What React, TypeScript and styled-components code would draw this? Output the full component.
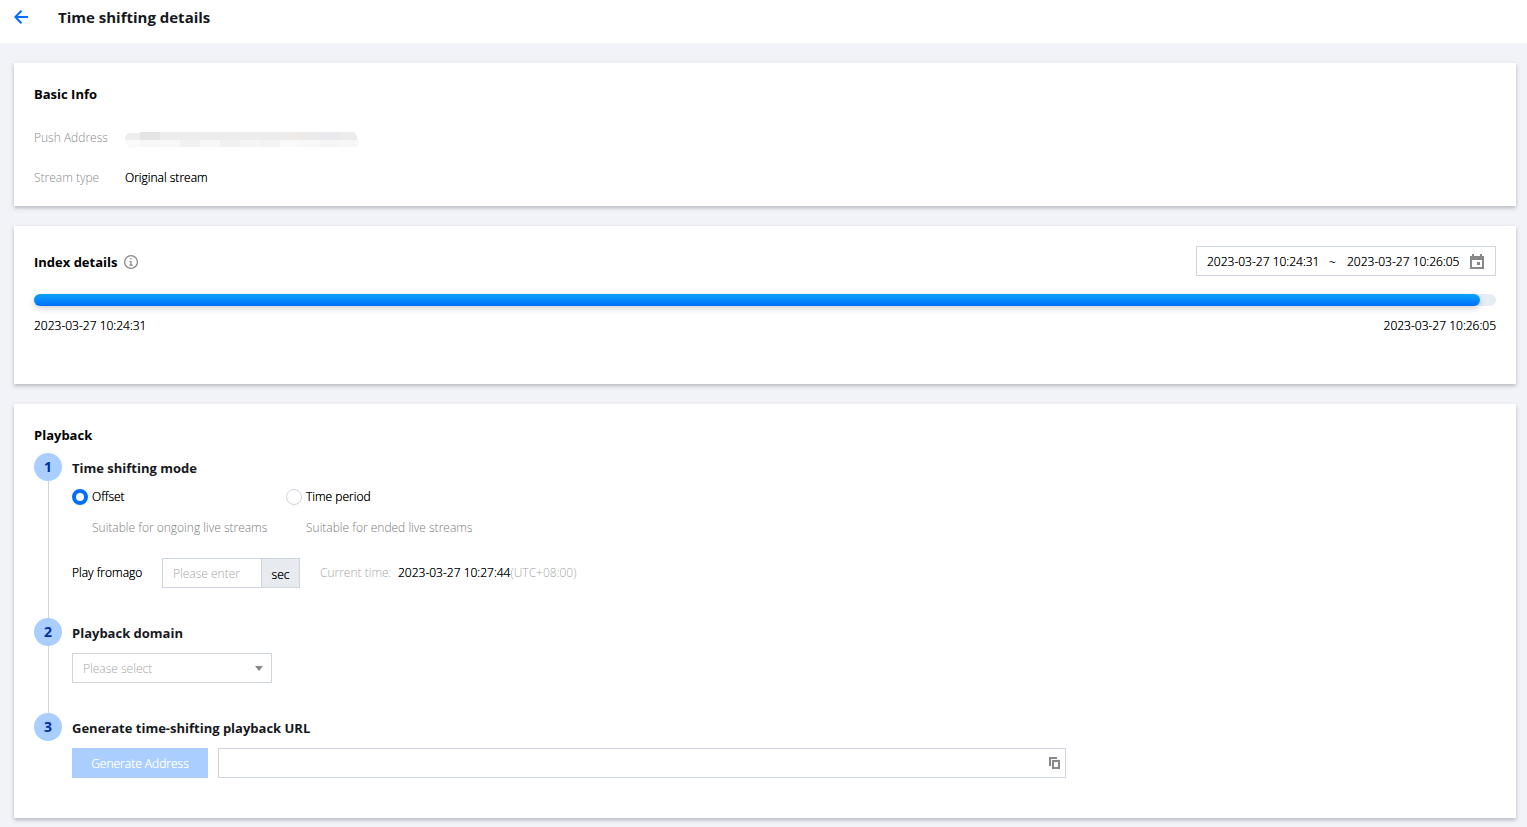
import React, { useState } from "react";
import styled, { createGlobalStyle } from "styled-components";

const GlobalStyle = createGlobalStyle`
  *, *::before, *::after { box-sizing: border-box; }
  body {
    margin: 0;
    background: #f2f3f8;
    color: #000;
    font-family: "Open Sans", "Noto Sans", sans-serif;
    font-size: 12px;
    font-weight: 300;
    line-height: 20px;
    text-shadow: 0 0 0 currentColor;
  }
  h1, h2, h3, p, dl, dd { margin: 0; }
  h1, h2, h3 { text-shadow: none; }
  button, input, select { font: inherit; color: inherit; margin: 0; text-shadow: inherit; }
  fieldset { border: 0; margin: 0; padding: 0; min-width: 0; }
`;

const Header = styled.header`
  display: flex;
  align-items: center;
  gap: 30px;
  height: 43px;
  padding: 0 14px 9px;
  background: #fff;
`;

const BackLink = styled.a`
  display: flex;
  color: #006eff;
`;

const PageTitle = styled.h1`
  font-size: 15px;
  font-weight: 700;
  line-height: 22px;
  color: #16181d;
`;

const Content = styled.main`
  display: flex;
  flex-direction: column;
  gap: 20px;
  padding: 20px 11px 9px 14px;
`;

const Card = styled.section<{ $bottom: number }>`
  padding: 20px 20px ${(p) => p.$bottom}px;
  background: #fff;
  box-shadow: 0 2px 4px rgba(54, 58, 80, 0.32);
`;

const CardTitle = styled.h2`
  font-size: 13px;
  font-weight: 700;
  line-height: 22px;
`;

const InfoList = styled.dl`
  display: grid;
  grid-template-columns: 91px 1fr;
  gap: 18px 0;
  margin-top: 22px;
  line-height: 22px;
`;

const InfoLabel = styled.dt`
  color: #888;
  text-shadow: none;
`;

const InfoValue = styled.dd`
  display: flex;
  align-items: center;
`;

const CardHead = styled.div`
  display: flex;
  align-items: center;
  justify-content: space-between;
  height: 30px;
`;

const TitleGroup = styled.div`
  display: flex;
  align-items: center;
  gap: 6px;
  padding-top: 2px;
`;

const IconButton = styled.button`
  display: flex;
  flex: none;
  padding: 0;
  border: 0;
  background: none;
  color: #888;
  cursor: pointer;
`;

const DateRange = styled.div`
  display: flex;
  align-items: center;
  width: 300px;
  height: 30px;
  padding: 0 10px;
  border: 1px solid #cfd5de;
`;

const DateInput = styled.input`
  flex: 1;
  min-width: 0;
  height: 28px;
  padding: 0;
  border: 0;
  outline: 0;
  background: none;
`;

const Tilde = styled.span`
  width: 18px;
  padding-top: 4px;
`;

const Track = styled.div`
  height: 12px;
  margin-top: 18px;
  border-radius: 6px;
  background: #e6edf7;
`;

const Fill = styled.div`
  height: 12px;
  border-radius: 6px;
  background: linear-gradient(#0aa5f5, #006eff);
  box-shadow: 0 2px 6px rgba(0, 0, 0, 0.2);
`;

const TrackLabels = styled.div`
  display: flex;
  justify-content: space-between;
  margin-top: 10px;
`;

const Steps = styled.div`
  display: flex;
  flex-direction: column;
  margin-top: 7px;
`;

const StepRow = styled.section`
  display: flex;
  gap: 10px;
`;

const StepRail = styled.div`
  display: flex;
  flex: none;
  flex-direction: column;
  align-items: center;
  width: 28px;
`;

const StepNumber = styled.span`
  width: 28px;
  height: 28px;
  border-radius: 50%;
  background: #a9ceff;
  color: #00309c;
  font-size: 14px;
  font-weight: 700;
  line-height: 28px;
  text-align: center;
  text-shadow: none;
`;

const StepLine = styled.span`
  flex: 1;
  width: 1px;
  background: #cfd5de;
`;

const StepBody = styled.div<{ $bottom: number }>`
  flex: 1;
  min-width: 0;
  padding-bottom: ${(p) => p.$bottom}px;
`;

const StepTitle = styled.h3`
  margin-bottom: 5px;
  font-size: 13px;
  font-weight: 700;
  line-height: 30px;
  color: #16181d;
`;

const ModeOptions = styled.fieldset`
  display: grid;
  grid-template-columns: repeat(2, 214px);
`;

const ModeLabel = styled.label`
  display: flex;
  align-items: center;
  gap: 4px;
  line-height: 18px;
`;

const Radio = styled.input`
  appearance: none;
  flex: none;
  width: 16px;
  height: 16px;
  border: 1px solid #cfd5de;
  border-radius: 50%;
  background: #fff;
  &:checked { border: 4px solid #006eff; }
`;

const ModeHint = styled.p`
  padding: 12px 0 0 20px;
  color: #7a7a7a;
  text-shadow: none;
`;

const OffsetRow = styled.div`
  display: flex;
  align-items: center;
  margin-top: 20px;
`;

const FieldLabel = styled.label`
  width: 90px;
`;

const InputGroup = styled.div`
  display: flex;
  width: 138px;
  height: 30px;
  margin-right: 20px;
  border: 1px solid #cfd5de;
`;

const OffsetInput = styled.input`
  flex: 1;
  min-width: 0;
  padding: 2px 10px 0;
  border: 0;
  outline: 0;
  &::placeholder { color: #a6a6a6; text-shadow: none; }
`;

const Unit = styled.span`
  width: 38px;
  border-left: 1px solid #cfd5de;
  background: #e7eaef;
  line-height: 32px;
  text-align: center;
`;

const Muted = styled.span`
  color: #a6a6a6;
  text-shadow: none;
`;

const CurrentTime = styled.p`
  display: flex;
`;

const CurrentLabel = styled(Muted)`
  width: 78px;
`;

const SelectBox = styled.div`
  display: grid;
  align-items: center;
  width: 200px;
  height: 30px;
  border: 1px solid #cfd5de;
  > * { grid-area: 1 / 1; }
  > svg { justify-self: end; margin-right: 8px; pointer-events: none; }
`;

const Select = styled.select`
  appearance: none;
  width: 100%;
  height: 28px;
  padding: 2px 26px 0 10px;
  border: 0;
  outline: 0;
  background: none;
  color: #a6a6a6;
  text-shadow: none;
`;

const GenerateRow = styled.div`
  display: flex;
  gap: 10px;
`;

const PrimaryButton = styled.button`
  flex: none;
  width: 136px;
  height: 30px;
  padding: 2px 0 0;
  border: 0;
  background: #a9ceff;
  color: #fff;
  text-shadow: 0 0 0 #fff;
`;

const UrlBox = styled.div`
  display: flex;
  flex: 0 1 848px;
  align-items: center;
  min-width: 0;
  height: 30px;
  padding-right: 5px;
  border: 1px solid #cfd5de;
`;

const UrlInput = styled.input`
  flex: 1;
  min-width: 0;
  height: 28px;
  padding: 0 10px;
  border: 0;
  outline: 0;
  background: none;
`;

const topTones = ["#ededed", "#e3e5e2", "#ededed", "#eeedeb", "#ececec", "#ededed", "#eeedeb", "#ededed", "#eeebe9", "#ebebeb", "#e9eaed", "#ebecec"];
const bottomTones = ["#fafafa", "#f7f7f7", "#f8f8f6", "#f1f1f1", "#f8f8f8", "#f0f0f0", "#f5f5f5", "#f3f3f3", "#f9f9f9", "#f8f8f8", "#f5f5f5", "#f7f7f7"];

function MaskedAddress() {
  return (
    <svg width="234" height="20" viewBox="0 -4 234 20" role="img" aria-label="Hidden address">
      <clipPath id="mask-shape">
        <path d="M4 1H15V0H228Q232 1 232 6Q234 8 233 12Q232 15 229 15H13L8 16H4Q1 14 1 9Q-1 8 0 5Q1 2 4 1Z" />
      </clipPath>
      <g clipPath="url(#mask-shape)" shapeRendering="crispEdges">
        {topTones.map((tone, i) => (
          <rect key={i} x={i * 20 - 5} y="0" width="20" height="8" fill={tone} />
        ))}
        {bottomTones.map((tone, i) => (
          <rect key={i} x={i * 20 - 5} y="8" width="20" height="8" fill={tone} />
        ))}
      </g>
    </svg>
  );
}

function Step({ number, title, bottom = 0, last = false, children }: {
  number: number; title: string; bottom?: number; last?: boolean; children: React.ReactNode;
}) {
  return (
    <StepRow>
      <StepRail>
        <StepNumber>{number}</StepNumber>
        {!last && <StepLine />}
      </StepRail>
      <StepBody $bottom={bottom}>
        <StepTitle>{title}</StepTitle>
        {children}
      </StepBody>
    </StepRow>
  );
}

const modes = [
  { id: "offset", label: "Offset", hint: "Suitable for ongoing live streams" },
  { id: "period", label: "Time period", hint: "Suitable for ended live streams" },
];

export default function App() {
  const [mode, setMode] = useState("offset");
  const [start, setStart] = useState("2023-03-27 10:24:31");
  const [end, setEnd] = useState("2023-03-27 10:26:05");

  return (
    <>
      <GlobalStyle />
      <Header>
        <BackLink href="#" aria-label="Back">
          <svg width="14" height="14" viewBox="0 0 14 14" fill="none" stroke="currentColor" strokeWidth="2">
            <path d="M7.5 0.8L1.4 7L7.5 13.2M1.4 7H14" />
          </svg>
        </BackLink>
        <PageTitle>Time shifting details</PageTitle>
      </Header>
      <Content>
        <Card $bottom={17}>
          <CardTitle>Basic Info</CardTitle>
          <InfoList>
            <InfoLabel>Push Address</InfoLabel>
            <InfoValue><MaskedAddress /></InfoValue>
            <InfoLabel>Stream type</InfoLabel>
            <InfoValue>Original stream</InfoValue>
          </InfoList>
        </Card>

        <Card $bottom={48}>
          <CardHead>
            <TitleGroup>
              <CardTitle>Index details</CardTitle>
              <IconButton type="button" aria-label="About index details">
                <svg width="16" height="16" viewBox="0 0 16 16" fill="none" stroke="currentColor">
                  <circle cx="8" cy="8" r="6.4" strokeWidth="1.3" />
                  <path d="M7.9 4V5.6M6.4 7.5H8.6M7.9 7V11.4M6.2 11.2H9.8" strokeWidth="1.2" />
                </svg>
              </IconButton>
            </TitleGroup>
            <DateRange>
              <DateInput aria-label="Start time" value={start} onChange={(e) => setStart(e.target.value)} />
              <Tilde>~</Tilde>
              <DateInput aria-label="End time" value={end} onChange={(e) => setEnd(e.target.value)} />
              <IconButton type="button" aria-label="Open calendar">
                <svg width="16" height="16" viewBox="0 0 16 16" fill="currentColor" shapeRendering="crispEdges">
                  <path d="M3 1H5V3H11V1H13V3H15V16H1V3H3ZM3 7V14H13V7ZM8 9H11V12H8Z" fillRule="evenodd" />
                </svg>
              </IconButton>
            </DateRange>
          </CardHead>
          <Track>
            <Fill style={{ width: "98.9%" }} />
          </Track>
          <TrackLabels>
            <span>{start}</span>
            <span>{end}</span>
          </TrackLabels>
        </Card>

        <Card $bottom={40}>
          <CardTitle>Playback</CardTitle>
          <Steps>
            <Step number={1} title="Time shifting mode" bottom={30}>
              <ModeOptions aria-label="Time shifting mode">
                {modes.map((m) => (
                  <div key={m.id}>
                    <ModeLabel>
                      <Radio type="radio" name="mode" checked={mode === m.id} onChange={() => setMode(m.id)} />
                      {m.label}
                    </ModeLabel>
                    <ModeHint>{m.hint}</ModeHint>
                  </div>
                ))}
              </ModeOptions>
              <OffsetRow>
                <FieldLabel htmlFor="offset-seconds">Play fromago</FieldLabel>
                <InputGroup>
                  <OffsetInput id="offset-seconds" placeholder="Please enter" />
                  <Unit>sec</Unit>
                </InputGroup>
                <CurrentTime>
                  <CurrentLabel>Current time:</CurrentLabel>
                  2023-03-27 10:27:44
                  <Muted>(UTC+08:00)</Muted>
                </CurrentTime>
              </OffsetRow>
            </Step>
            <Step number={2} title="Playback domain" bottom={30}>
              <SelectBox>
                <Select aria-label="Playback domain" defaultValue="">
                  <option value="">Please select</option>
                </Select>
                <svg width="8" height="5" viewBox="0 0 8 5" fill="#888">
                  <path d="M0 0H8L4 5Z" />
                </svg>
              </SelectBox>
            </Step>
            <Step number={3} title="Generate time-shifting playback URL" last>
              <GenerateRow>
                <PrimaryButton type="button">Generate Address</PrimaryButton>
                <UrlBox>
                  <UrlInput aria-label="Playback URL" readOnly />
                  <IconButton type="button" aria-label="Copy URL">
                    <svg width="11" height="12" viewBox="0 0 11 12" fill="currentColor" shapeRendering="crispEdges">
                      <path d="M0 0H8V2H2V9H0Z" />
                      <path d="M3 3H11V12H3ZM5 5V10H9V5Z" fillRule="evenodd" />
                    </svg>
                  </IconButton>
                </UrlBox>
              </GenerateRow>
            </Step>
          </Steps>
        </Card>
      </Content>
    </>
  );
}
